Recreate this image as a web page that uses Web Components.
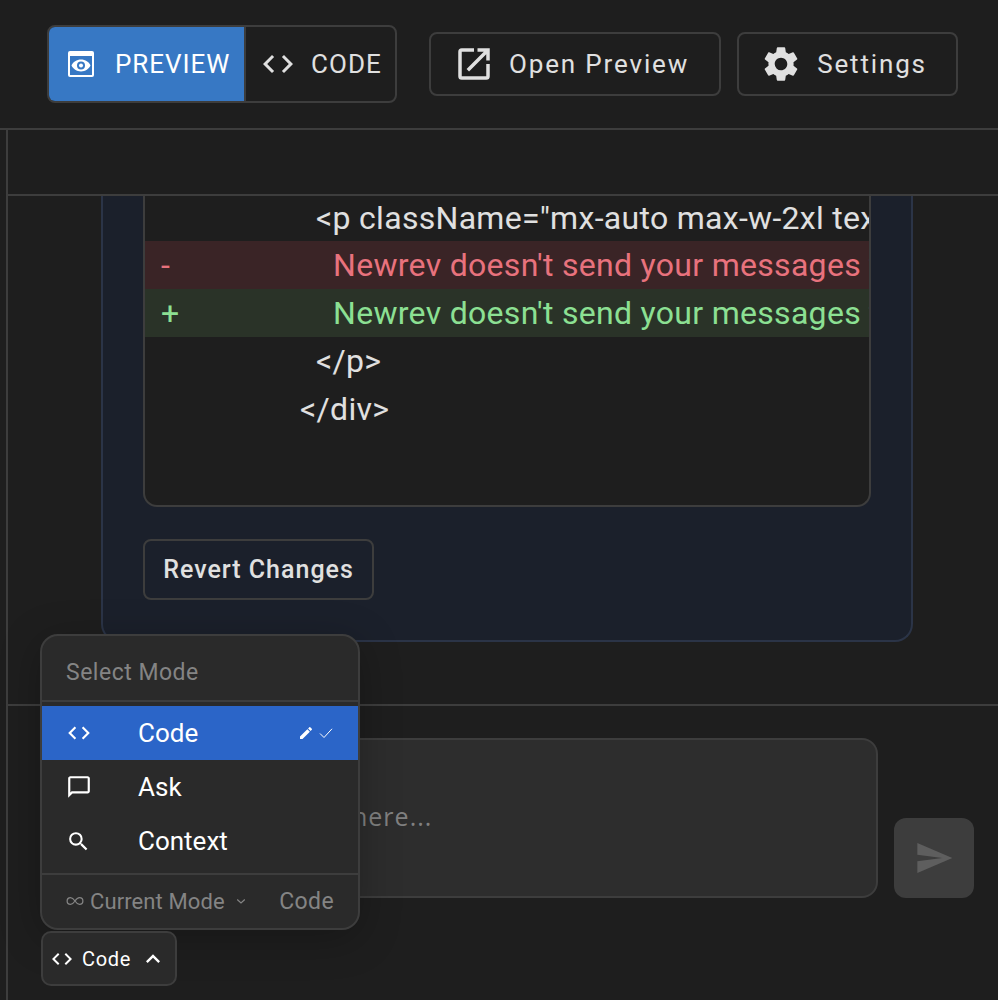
<!DOCTYPE html>
<html><head><meta charset="utf-8">
<style>
html,body{margin:0;height:100%;background:#1e1e1e}
body{overflow:hidden}
</style></head><body>
<app-shell></app-shell>
<script>
const I={
code:(s,c='currentColor')=>`<svg width="${s}" height="${s}" viewBox="0 0 24 24" fill="${c}"><path d="M9.4 16.6 4.8 12l4.6-4.6L8 6l-6 6 6 6 1.4-1.4zm5.2 0 4.6-4.6-4.6-4.6L16 6l6 6-6 6-1.4-1.4z"/></svg>`,
preview:`<svg width="28" height="28" viewBox="0 0 28 28"><rect x="1" y="1" width="26" height="26" rx="2" fill="#fff"/><rect x="3" y="6" width="22" height="19" fill="#3778c4"/><path d="M14 9.6c-4.3 0-8 2.6-9.5 5.9C6 18.800 9.700 21.400 14 21.400s8-2.600 9.500-5.900C22 12.200 18.300 9.600 14 9.600z" fill="#fff"/><circle cx="14" cy="15.500" r="4" fill="#3778c4"/><circle cx="14" cy="15.500" r="2" fill="#fff"/></svg>`,
open:`<svg width="42" height="42" viewBox="0 0 24 24" fill="#e0e0e0"><path d="M19 19H5V5h7V3H5a2 2 0 0 0-2 2v14a2 2 0 0 0 2 2h14a2 2 0 0 0 2-2v-7h-2v7zM14 3v2h3.590l-9.830 9.830 1.410 1.410L19 6.410V10h2V3h-7z"/></svg>`,
gear:`<svg width="42" height="42" viewBox="0 0 24 24" fill="#e0e0e0"><path d="M19.140 12.940c.04-.3.060-.61.060-.94 0-.32-.02-.64-.07-.94l2.030-1.580a.49.490 0 0 0 .12-.61l-1.920-3.320a.488.488 0 0 0-.59-.22l-2.390.96c-.5-.38-1.030-.7-1.620-.94l-.36-2.540a.484.484 0 0 0-.48-.41h-3.840c-.24 0-.43.170-.47.410l-.36 2.540c-.59.240-1.130.570-1.620.94l-2.390-.96c-.22-.08-.47 0-.59.220L2.740 8.870c-.12.210-.08.470.12.610l2.030 1.580c-.05.300-.09.630-.09.940s.2.640.07.940l-2.030 1.580a.49.490 0 0 0-.12.610l1.920 3.320c.12.220.37.290.59.220l2.390-.96c.5.380 1.030.7 1.620.94l.36 2.540c.05.240.24.410.48.410h3.840c.24 0 .44-.17.470-.41l.36-2.540c.59-.24 1.130-.56 1.620-.94l2.390.96c.22.080.47 0 .59-.22l1.920-3.320c.12-.22.070-.47-.12-.61l-2.010-1.580zM12 15.600A3.610 3.610 0 0 1 8.400 12c0-1.980 1.620-3.600 3.600-3.600s3.600 1.620 3.600 3.600-1.620 3.600-3.600 3.600z"/></svg>`,
ask:`<svg width="26" height="26" viewBox="0 0 24 24" fill="#fff"><path d="M20 2H4c-1.100 0-2 .9-2 2v18l4-4h14c1.100 0 2-.9 2-2V4c0-1.100-.9-2-2-2zm0 14H5.170L4 17.170V4h16v12z"/></svg>`,
search:`<svg width="25" height="25" viewBox="0 0 24 24" fill="#fff"><path d="M15.500 14h-.79l-.28-.27A6.470 6.470 0 0 0 16 9.500 6.500 6.500 0 1 0 9.500 16c1.610 0 3.090-.59 4.230-1.570l.27.280v.79l5 4.990L20.490 19l-4.990-5zm-6 0C7.010 14 5 11.990 5 9.500S7.010 5 9.500 5 14 7.010 14 9.500 11.990 14 9.500 14z"/></svg>`,
edit:`<svg width="16" height="16" viewBox="0 0 24 24" fill="#fff"><path d="M3 17.250V21h3.750L17.810 9.940l-3.750-3.750L3 17.250zM20.710 7.040a1 1 0 0 0 0-1.410l-2.340-2.340a1 1 0 0 0-1.410 0l-1.830 1.830 3.750 3.750 1.830-1.830z"/></svg>`,
check:`<svg width="16" height="16" viewBox="0 0 16 16" fill="none" stroke="#fff" stroke-width="1"><path d="M2 8.500 6 12.500 14 3.800"/></svg>`,
inf:`<svg width="18" height="18" viewBox="0 0 24 24" fill="none" stroke="#848484" stroke-width="1.700"><path d="M12 12c-2-3-4-4.500-6-4.500a4.500 4.500 0 0 0 0 9c2 0 4-1.500 6-4.500s4-4.500 6-4.500a4.500 4.500 0 0 1 0 9c-2 0-4-1.500-6-4.500z"/></svg>`,
down:`<svg width="12" height="12" viewBox="0 0 12 12" fill="none" stroke="#848484" stroke-width="1.200"><path d="M2.200 4.500 6 8l3.800-3.500"/></svg>`,
up:`<svg width="28" height="28" viewBox="0 0 24 24" fill="#fff"><path d="M12 8l-6 6 1.410 1.410L12 10.830l4.590 4.580L18 14z"/></svg>`,
send:`<svg width="40" height="40" viewBox="0 0 24 24" fill="#5e5e5e"><path d="M2.010 21 23 12 2.010 3 2 10l15 2-15 2z"/></svg>`
};
const base=`:host{font-family:Roboto,"Liberation Sans",sans-serif;box-sizing:border-box}*{box-sizing:border-box}`;
function def(n,html){customElements.define(n,class extends HTMLElement{constructor(){super();this.attachShadow({mode:'open'}).innerHTML=`<style>${base}</style>`+html}})}

def('view-toggle',`<style>
:host{display:flex;width:350px;height:78px;border:2px solid #3d3d3d;border-radius:8px;overflow:hidden;font-size:26px;letter-spacing:1.050px;font-weight:400}
.b{display:flex;align-items:center;height:100%}
.p{width:197px;background:#3778c4;color:#fff;padding-left:18px;gap:20px;border-right:2px solid #3d3d3d;letter-spacing:.93px}
.c{flex:1;color:#e0e0e0;padding-left:14px;gap:15px}
.c svg{display:block}
</style><div class="b p">${I.preview}<span>PREVIEW</span></div><div class="b c">${I.code(36,'#e0e0e0')}<span>CODE</span></div>`);

def('top-button',`<style>
:host{display:inline-flex;align-items:center;height:64px;border:2px solid #3d3d3d;border-radius:8px;color:#e0e0e0;font-size:26px;letter-spacing:1.850px;padding:0 var(--pr,29px) 0 var(--pl,22px);gap:var(--g,15px)}
</style><slot name="i"></slot><slot></slot>`);

def('app-header',`<style>
:host{display:flex;align-items:center;height:130px;border-bottom:2px solid #3d3d3d;padding:0 0 0 47px;flex:none}
.g{width:32px}.h{width:16px}
</style><slot name="toggle"></slot><div class="g"></div><slot name="open"></slot><div class="h"></div><slot name="settings"></slot>`);

def('diff-line',`<style>
:host{display:flex;height:48px;line-height:var(--lh,48px);font-size:32px;letter-spacing:.3px;white-space:pre;padding-left:16px;overflow:hidden;color:#e0e0e0}
:host([k=del]){background:#3a2426;color:#e8727d}
:host([k=add]){background:#2a3328;color:#8ce093}
.m{flex:none;width:var(--x,0)}
</style><span class="m"><slot name="m"></slot></span><slot></slot>`);

def('diff-card',`<style>
:host{display:block;height:449px;margin:-3px 85px 0 93px;background:#1b202b;border:2px solid #2b3447;border-top:0;border-radius:0 0 18px 18px;padding:0 40px}
.code{height:314px;background:#1e1e1e;border:2px solid #3d3d3d;border-top:0;border-radius:0 0 14px 14px;overflow:hidden;margin-bottom:32px}
button{all:unset;box-sizing:border-box;display:flex;align-items:center;justify-content:center;width:231px;height:61px;border:2px solid #3d3d3d;border-radius:8px;color:#e0e0e0;font-family:inherit;font-size:25px;font-weight:500;letter-spacing:1px}
</style><div class="code"><slot></slot></div><button>Revert Changes</button>`);

def('mode-menu',`<style>
:host{display:block;position:absolute;left:40px;top:634px;width:320px;height:296px;background:#2a2a2a;border:2px solid #3d3d3d;border-radius:18px;overflow:hidden;box-shadow:0 8px 40px rgba(0,0,0,.25);font-size:26px;color:#fff}
.t{height:66px;padding:8px 0 0 24px;display:flex;align-items:center;color:#848484;font-size:23px;letter-spacing:.5px;border-bottom:2px solid #3d3d3d;margin-bottom:4px}
.r{height:54px;display:flex;align-items:center;padding-left:24px}
.r svg{display:block}
.ic{width:72px;display:flex;flex:none}
.s{background:#2b65c8}
.end{margin-left:auto;display:flex;gap:4px;padding-right:24px}
.f{margin-top:5px;height:54px;border-top:2px solid #3d3d3d;display:flex;align-items:center;padding:0 24px 0 24px;color:#848484;font-size:22px;letter-spacing:.1px}
.f .a{margin:0 0 0 6px}
.f .d{margin-left:10px;display:flex}
.f .e{margin-left:auto;font-size:23px;letter-spacing:.4px}
</style>
<div class="t">Select Mode</div>
<div class="r s"><span class="ic">${I.code(26,'#fff')}</span>Code<span class="end">${I.edit}${I.check}</span></div>
<div class="r"><span class="ic">${I.ask}</span>Ask</div>
<div class="r"><span class="ic">${I.search}</span>Context</div>
<div class="f">${I.inf}<span class="a">Current Mode</span><span class="d">${I.down}</span><span class="e">Code</span></div>`);

def('mode-button',`<style>
:host{display:flex;position:absolute;left:41px;top:931px;width:136px;height:55px;align-items:center;padding-left:7px;background:#2a2a2a;border:2px solid #3d3d3d;border-radius:10px;color:#fff;font-size:20px;letter-spacing:.7px}
span{margin-left:8px}
svg{display:block}
svg:last-child{margin-left:8px}
</style>${I.code(24,'#fff')}<span>Code</span>${I.up}`);

def('chat-composer',`<style>
:host{display:block;height:296px;padding:32px 24px 0 42px;flex:none;border-top:2px solid #3d3d3d}
.wrap{display:flex;align-items:flex-end;gap:16px;height:160px}
.box{flex:1;height:160px;background:#2d2d2d;border:2px solid #3d3d3d;border-radius:16px;display:flex;align-items:center;padding:0 0 4px 300px;font-family:"Open Sans",sans-serif;color:#808080;font-size:25px;letter-spacing:1px}
.send{width:80px;height:80px;border-radius:12px;background:#3d3d3d;display:flex;align-items:center;justify-content:center;flex:none}
</style><div class="wrap"><div class="box">here...</div><div class="send">${I.send}</div></div>`);

def('app-shell',`<style>
:host{display:flex;flex-direction:column;position:relative;width:998px;height:1000px;background:#1e1e1e;overflow:hidden}
.panel{flex:1;min-height:0;display:flex;flex-direction:column;border-left:2px solid #3d3d3d;margin-left:6px}
.sub{height:66px;border-bottom:2px solid #3d3d3d;flex:none}
.scroll{flex:1;min-height:0;overflow:hidden}
</style>
<app-header>
<view-toggle slot="toggle"></view-toggle>
<top-button slot="open" style="--g:14px;--pr:30px"><span slot="i" style="display:flex">${I.open}</span>Open Preview</top-button>
<top-button slot="settings" style="--pl:21px"><span slot="i" style="display:flex">${I.gear}</span>Settings</top-button>
</app-header>
<div class="panel"><div class="sub"></div>
<div class="scroll"><diff-card>
<diff-line style="--x:155px;--lh:50px">&lt;p className="mx-auto max-w-2xl text-center"&gt;</diff-line>
<diff-line k="del" style="--x:172px"><span slot="m">-</span>Newrev doesn't send your messages to servers</diff-line>
<diff-line k="add" style="--x:172px"><span slot="m">+</span>Newrev doesn't send your messages to servers</diff-line>
<diff-line style="--x:155px">&lt;/p&gt;</diff-line>
<diff-line style="--x:139px">&lt;/div&gt;</diff-line>
</diff-card></div>
<chat-composer></chat-composer>
</div>
<mode-menu></mode-menu><mode-button></mode-button>`);
</script></body></html>
